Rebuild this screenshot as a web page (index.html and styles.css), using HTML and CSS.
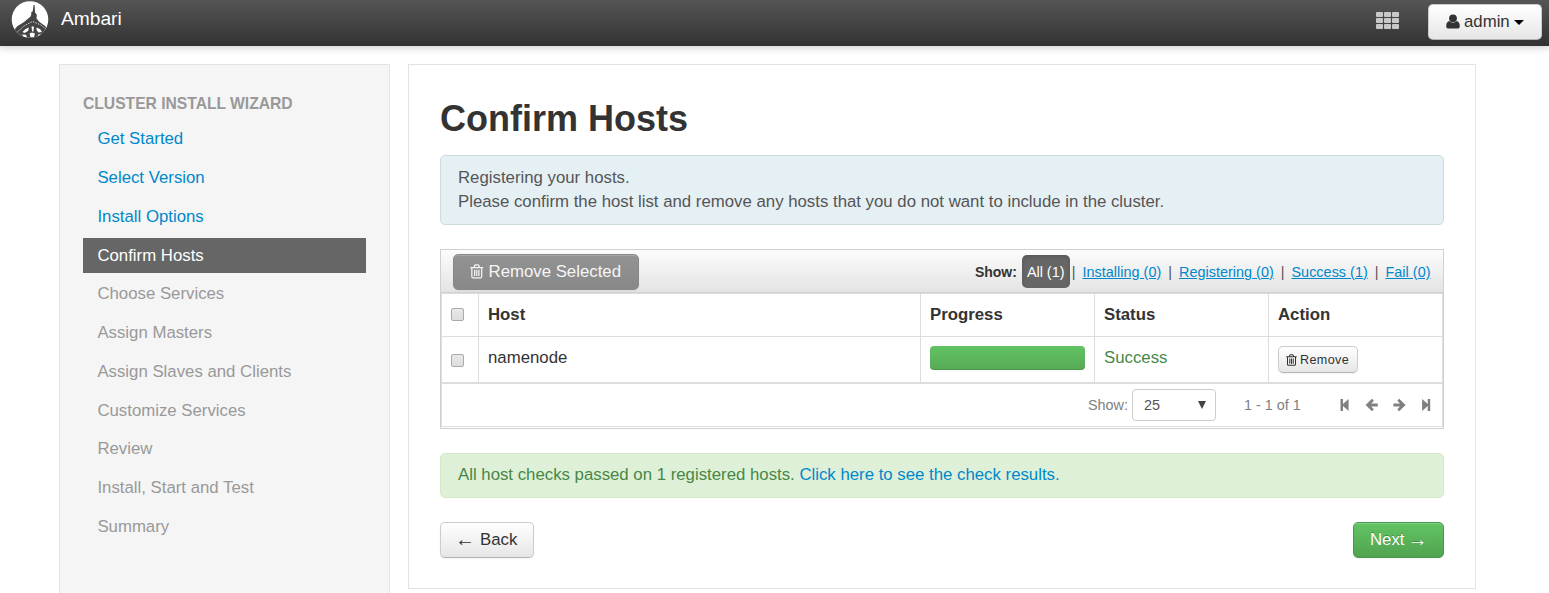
FILE: index.html
```html
<!DOCTYPE html>
<html lang="en">
<head>
<meta charset="utf-8">
<title>Ambari</title>
<link rel="stylesheet" href="styles.css">
</head>
<body>
<svg class="sprite" aria-hidden="true">
  <symbol id="trash" viewBox="0 0 14 15">
    <path fill="none" stroke="currentColor" stroke-width="1.3" d="M0.3 3.4h13.4M4.3 3.2l.7-2.1q.1-.4.6-.4h2.8q.5 0 .6.4l.7 2.1M1.9 3.4v9.4q0 1.4 1.3 1.4h7.6q1.3 0 1.3-1.4V3.4M4.8 5.6v6.6M7 5.6v6.6M9.2 5.6v6.6"/>
  </symbol>
</svg>
<header class="navbar">
  <svg class="logo" viewBox="0 0 38 40">
    <clipPath id="disc"><circle cx="19" cy="19.500" r="18.300"/></clipPath>
    <circle cx="19" cy="19.500" r="18.300" fill="#fff"/>
    <g clip-path="url(#disc)">
      <path fill="#444" d="M22.600 5h1l.5 7.800 1.700 1.600-.3 4.200 3 3.400 5 3.500 4.500 5.500-1 8H6l-5-6 5-6.500 7-4.500 6.600-5.400.8-2.600-.4-1.200 1.700-1.600z"/>
      <path fill="none" stroke="#fff" stroke-width=".8" stroke-dasharray="1.500 1.200" d="M6.500 32l6.500-6 8.500-4.500 8.500 3.500 6.500 5.500"/>
      <path fill="#fff" d="M0 30l5 2 2 3 3 5H0zM11.500 32l3-3 3.500-1.500-1 3.500-3.500 2zM20.500 26.500h2.500l-.6 5h-1.300zM25.500 27.500l3.500 1.500 2 3-3.500.5-2-2.500zM11 34.500l4 .3 1 2.500h-3zM18.500 33.500l2.500-1 3 1-1 3.500h-3.500zM27 34.500l3.500-.3-1.500 2.800-2 .8zM33.500 32l5-2v10h-7z"/>
    </g>
  </svg>
  <span class="brand">Ambari</span>
  <svg class="grid-icon" viewBox="0 0 23 18" fill="#c8c8c8">
    <rect x="0" y="0" width="7" height="5" rx="1"/><rect x="8" y="0" width="7" height="5" rx="1"/><rect x="16" y="0" width="7" height="5" rx="1"/>
    <rect x="0" y="6" width="7" height="5" rx="1"/><rect x="8" y="6" width="7" height="5" rx="1"/><rect x="16" y="6" width="7" height="5" rx="1"/>
    <rect x="0" y="12" width="7" height="5" rx="1"/><rect x="8" y="12" width="7" height="5" rx="1"/><rect x="16" y="12" width="7" height="5" rx="1"/>
  </svg>
  <button class="btn user">
    <svg width="14" height="16" viewBox="0 0 14 16" fill="#333"><circle cx="7" cy="4.300" r="3.900"/><path d="M3.200 7Q7 10.600 10.800 7 13.800 7.800 13.800 12.400q0 2.200-2.400 2.200H2.600Q.2 14.600.2 12.400.2 7.800 3.200 7z"/></svg>
    <span>admin</span><i class="caret"></i>
  </button>
</header>
<div class="page">
  <nav class="sidebar">
    <h5 class="side-title">CLUSTER INSTALL WIZARD</h5>
    <a class="step link">Get Started</a>
    <a class="step link">Select Version</a>
    <a class="step link">Install Options</a>
    <a class="step active">Confirm Hosts</a>
    <a class="step">Choose Services</a>
    <a class="step">Assign Masters</a>
    <a class="step">Assign Slaves and Clients</a>
    <a class="step">Customize Services</a>
    <a class="step">Review</a>
    <a class="step">Install, Start and Test</a>
    <a class="step">Summary</a>
  </nav>
  <main class="content">
    <h2 class="title">Confirm Hosts</h2>
    <div class="alert info">Registering your hosts.<br>Please confirm the host list and remove any hosts that you do not want to include in the cluster.</div>
    <section class="hosts">
      <div class="toolbar">
        <button class="btn remove-all"><svg width="14" height="15"><use href="#trash"/></svg><span>Remove Selected</span></button>
        <div class="filters">
          <b class="show">Show:</b><span class="pill">All (1)</span><i class="first">|</i><a>Installing (0)</a><i>|</i><a>Registering (0)</a><i>|</i><a>Success (1)</a><i>|</i><a>Fail (0)</a>
        </div>
      </div>
      <div class="table">
        <div class="row head">
          <div class="cell"><span class="check"></span></div><div class="cell">Host</div><div class="cell">Progress</div><div class="cell">Status</div><div class="cell">Action</div>
        </div>
        <div class="row body">
          <div class="cell"><span class="check"></span></div><div class="cell">namenode</div><div class="cell"><div class="bar"></div></div><div class="cell success">Success</div><div class="cell"><button class="btn mini"><svg width="11" height="12"><use href="#trash"/></svg><span>Remove</span></button></div>
        </div>
        <div class="pager">
          <span class="pager-label">Show:</span>
          <div class="select"><span>25</span><i class="arrow"></i></div>
          <span class="range">1 - 1 of 1</span>
          <svg class="nav-icons" viewBox="0 0 92 14" fill="#808080">
            <path d="M1.500 1H4v5L9.600 1v12L4 8v5H1.500z"/>
            <path d="M26.600 7l6.400-6.200 1.900 1.900-2.700 2.700h6.600v3.200h-6.600l2.700 2.700-1.900 1.900z"/>
            <path d="M66.600 7l-6.400-6.200-1.900 1.900 2.700 2.700h-6.600v3.200H61l-2.700 2.700 1.900 1.900z"/>
            <path d="M91.200 1h-2.500v5L83.100 1v12l5.600-5v5h2.500z"/>
          </svg>
        </div>
      </div>
    </section>
    <div class="alert ok">All host checks passed on 1 registered hosts. <a>Click here to see the check results.</a></div>
    <div class="actions"><button class="btn back"><span class="dir">←</span>Back</button><button class="btn next">Next<span class="dir">→</span></button></div>
  </main>
</div>
</body>
</html>
```
FILE: styles.css
```css
* { box-sizing: border-box; }
html, body { height: 100%; }
body {
  margin: 0;
  overflow: hidden;
  background: #fff;
  color: #333;
  font: 16.8px/24px "Liberation Sans", Arial, sans-serif;
}
.sprite { position: absolute; width: 0; height: 0; }
i { font-style: normal; }
.navbar {
  display: flex;
  align-items: flex-start;
  height: 46px;
  padding-left: 11px;
  padding-right: 7px;
  background: linear-gradient(#555, #333);
  box-shadow: 0 1px 10px rgba(0, 0, 0, .12);
}
.logo { width: 38px; height: 40px; }
.brand { margin: 7px auto 0 12px; color: #fff; font-size: 19.2px; }
.grid-icon { width: 23px; height: 18px; margin: 12px 29px 0 0; }
.btn {
  display: flex;
  align-items: center;
  height: 36px;
  padding: 0 17px;
  border: 1px solid #ccc;
  border-bottom-color: #b3b3b3;
  border-radius: 5px;
  background: linear-gradient(#fff, #e6e6e6);
  box-shadow: inset 0 1px 0 rgba(255, 255, 255, .2), 0 1px 2px rgba(0, 0, 0, .05);
  color: #333;
  font: inherit;
  white-space: nowrap;
}
.user { width: 114px; margin-top: 4px; gap: 4px; }
.caret { border: 5px solid transparent; border-top-color: #000; border-bottom: 0; }
.page { display: flex; align-items: flex-start; gap: 18px; height: calc(100% - 46px); padding: 18px 0 0 59px; overflow: hidden; box-shadow: inset 0 10px 8px -10px rgba(0, 0, 0, .12); }
.sidebar {
  width: 331px;
  height: 100%;
  padding: 26px 23px 0;
  border: 1px solid #e3e3e3;
  border-bottom: 0;
  background: #f5f5f5;
}
.side-title { margin: 0 0 6px; padding-top: 1px; color: #999; font-size: 15.7px; line-height: 24px; letter-spacing: -.03px; }
.step { display: block; height: 35px; margin-bottom: 3.8px; padding: 5px 14.4px; color: #999; }
.link { color: #08c; }
.active { padding-top: 6px; background: #666; color: #fff; }
.content { width: 1068px; height: 525px; padding: 30px 31px; border: 1px solid #e3e3e3; }
.title { margin: 0 0 12px; font-size: 36px; line-height: 48px; }
.alert { padding: 9px 17px; border: 1px solid; border-radius: 5px; white-space: nowrap; }
.info { height: 70px; padding-top: 10px; border-color: #cddcdd; background: #e5f0f5; color: #555; }
.ok { height: 45px; border-color: #d6e9c6; background: #dff0d8; color: #468847; }
.ok a { color: #08c; }
.hosts { height: 180px; margin: 24px 0; border: 1px solid #d0d0d0; }
.toolbar {
  display: flex;
  justify-content: space-between;
  align-items: center;
  height: 43px;
  padding: 1px 12.5px 0 12px;
  background: linear-gradient(#fcfcfc, #e4e4e4);
  border-bottom: 1px solid #d0d0d0;
}
.remove-all { width: 186px; gap: 4px; border-color: #888; background: linear-gradient(#939393, #888); color: #f5f5f5; }
.remove-all svg { margin-left: -1px; }
.remove-all span { margin-left: 1px; }
.filters { display: flex; align-items: center; font-size: 14.4px; }
.filters a { color: #08c; text-decoration: underline; letter-spacing: .03px; }
.filters i { width: 17.7px; color: #555; text-align: center; }
.filters .first { width: 12.6px; padding-right: 5px; }
.show { font-size: 14px; }
.pill { width: 48px; padding: 5px; margin-left: 5px; height: 33px; border-radius: 5px; background: #666; color: #fff; white-space: nowrap; box-shadow: inset 0 2px 4px rgba(0, 0, 0, .15); }
.table { border: 1px solid #ddd; height: 134px; }
.row { display: grid; grid-template-columns: 36px 442px 174px 174px 1fr; border-bottom: 1px solid #ddd; }
.head { height: 43px; font-weight: bold; }
.body { height: 46px; }
.cell { padding: 9px; border-left: 1px solid #ddd; }
.cell:first-child { border-left: 0; }
.check { display: block; width: 13px; height: 13px; margin-top: 5px; border: 1px solid #aaa; border-radius: 2px; background: linear-gradient(#e8e8e8, #ddd); }
.body .check { margin-top: 8px; }
.bar { width: 155px; height: 24px; border-radius: 4px; background: linear-gradient(#62c462, #57a957); box-shadow: inset 0 -1px 0 rgba(0, 0, 0, .1); }
.success { color: #468847; }
.mini { width: 80px; height: 27px; padding: 0 7px; gap: 3px; font-size: 12.6px; }
.mini span { letter-spacing: .35px; }
.mini svg { flex: none; }
.pager { display: flex; align-items: center; height: 42px; padding: 0 11px; border-top: 1px solid #ddd; font-size: 14.4px; color: #808080; }
.pager-label { margin-left: auto; }
.select { display: flex; align-items: center; justify-content: space-between; width: 84px; height: 32px; margin: 1px 28px 0 4px; padding: 0 9px 0 11px; border: 1px solid #ccc; border-radius: 4px; color: #555; }
.arrow { border: 4.5px solid transparent; border-top: 8px solid #444; border-bottom: 0; }
.range { width: 57px; white-space: nowrap; }
.nav-icons { width: 92px; height: 14px; margin-left: 38px; }
.actions { display: flex; justify-content: space-between; margin-top: 24px; }
.back { width: 94px; }
.next { width: 91px; padding-left: 16px; border-color: #4a964a; background: linear-gradient(#62c462, #51a351); color: #fff; text-shadow: 0 -1px 0 rgba(0, 0, 0, .25); }
.dir { flex: none; width: 20px; margin-bottom: 3px; font: 20px/24px "Liberation Serif", serif; }
.back .dir { margin-left: -3px; margin-right: 5px; }
.next .dir { margin-left: 3px; }
```
